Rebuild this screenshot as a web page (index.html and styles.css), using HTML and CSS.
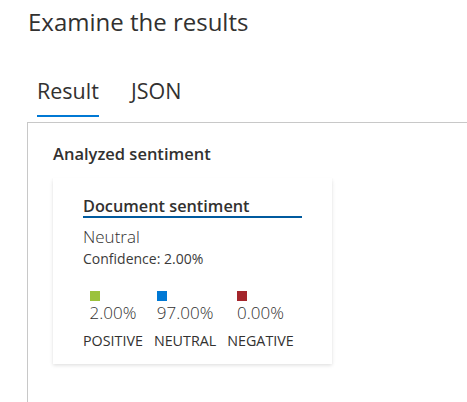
FILE: index.html
```html
<!DOCTYPE html>
<html lang="en">
<head>
<meta charset="utf-8">
<title>Examine the results</title>
<link rel="stylesheet" href="styles.css">
</head>
<body>
<div class="page">
  <h1 class="title">Examine the results</h1>
  <div class="tabs">
    <div class="tab tab-active">Result</div>
    <div class="tab">JSON</div>
  </div>
  <div class="panel">
    <div class="section-title">Analyzed sentiment</div>
    <div class="card">
      <div class="card-header">Document sentiment</div>
      <div class="overall">Neutral</div>
      <div class="confidence">Confidence: 2.00%</div>
      <div class="scores">
        <div class="score">
          <div class="score-top">
            <span class="swatch swatch-pos"></span>
            <span class="score-value">2.00%</span>
          </div>
          <div class="score-label">POSITIVE</div>
        </div>
        <div class="score">
          <div class="score-top">
            <span class="swatch swatch-neu"></span>
            <span class="score-value">97.00%</span>
          </div>
          <div class="score-label">NEUTRAL</div>
        </div>
        <div class="score">
          <div class="score-top">
            <span class="swatch swatch-neg"></span>
            <span class="score-value">0.00%</span>
          </div>
          <div class="score-label">NEGATIVE</div>
        </div>
      </div>
    </div>
  </div>
</div>
</body>
</html>
```
FILE: styles.css
```css
html, body {
  margin: 0;
  padding: 0;
  background: #ffffff;
}
body {
  font-family: "Open Sans", "Noto Sans", sans-serif;
  color: #323130;
}
.page {
  display: flex;
  flex-direction: column;
  padding: 0 0 0 28px;
  width: 467px;
  height: 402px;
  box-sizing: border-box;
  overflow: hidden;
}
.title {
  margin: 0;
  padding-top: 6px;
  font-size: 24px;
  line-height: 32px;
  font-weight: 400;
  color: #323130;
}
.tabs {
  display: flex;
  gap: 32px;
  margin: 39px 0 0 9px;
}
.tab {
  font-size: 21.5px;
  line-height: 28px;
  padding-bottom: 10px;
  color: #323130;
  border-bottom: 2px solid transparent;
}
.tab-active {
  border-bottom-color: #0078d4;
}
.panel {
  flex: 1;
  margin: 5px 0 0 -1px;
  border-top: 1px solid #c8c8c8;
  border-left: 1px solid #c8c8c8;
  padding: 20px 0 0 25px;
}
.section-title {
  font-size: 16.5px;
  line-height: 22px;
  font-weight: 600;
  color: #323130;
}
.card {
  margin-top: 13px;
  width: 279px;
  height: 186px;
  box-sizing: border-box;
  padding: 19px 30px 0 30px;
  background: #fff;
  box-shadow: 0 1.6px 3.6px rgba(0, 0, 0, 0.13), 0 0.3px 0.9px rgba(0, 0, 0, 0.11);
}
.card-header {
  font-size: 16.3px;
  line-height: 19px;
  font-weight: 600;
  border-bottom: 2px solid #005a9e;
}
.overall {
  margin-top: 8px;
  font-size: 17px;
  line-height: 22px;
  font-weight: 300;
}
.confidence {
  margin-top: 2px;
  font-size: 14px;
  line-height: 18px;
  font-weight: 400;
  color: #3b3a39;
}
.scores {
  display: flex;
  gap: 11px;
  margin-top: 23px;
}
.score {
  display: flex;
  flex-direction: column;
  align-items: center;
}
.score-top {
  display: flex;
  flex-direction: column;
  align-items: flex-start;
}
.swatch {
  display: block;
  width: 10px;
  height: 10px;
}
.swatch-pos { background: #9bc23c; }
.swatch-neu { background: #0078d4; }
.swatch-neg { background: #a4262c; }
.score-value {
  margin-top: 1px;
  font-size: 17px;
  line-height: 22px;
  font-weight: 300;
}
.score-label {
  margin-top: 8px;
  font-size: 14.3px;
  line-height: 18px;
}
```
